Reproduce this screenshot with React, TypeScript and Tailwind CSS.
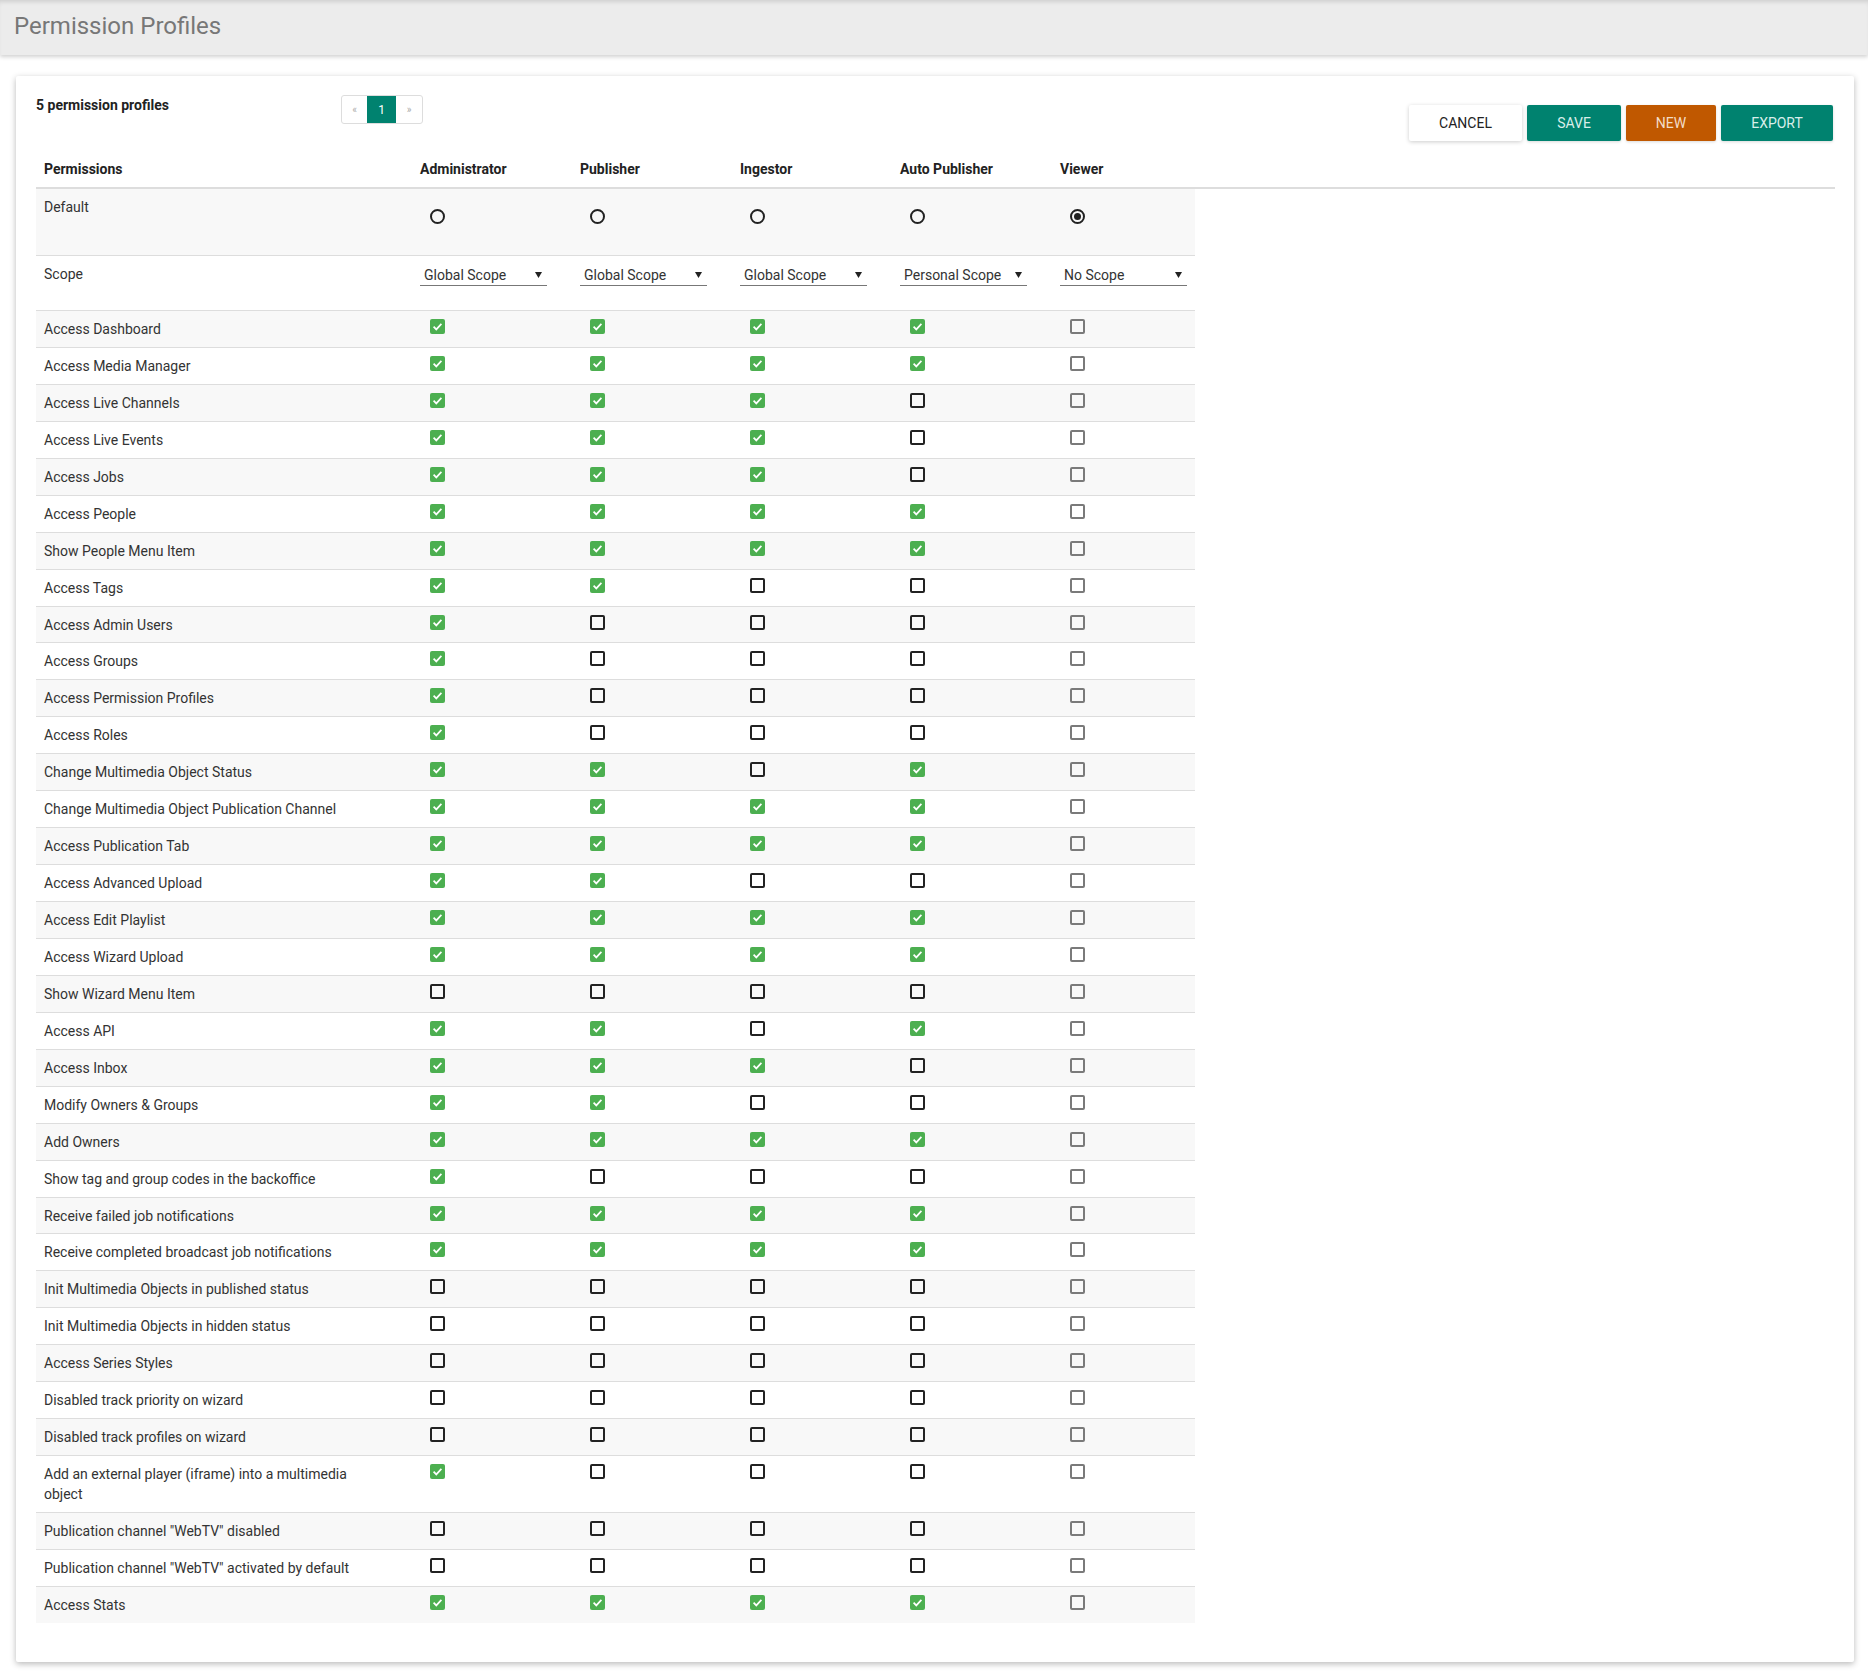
import React from 'react'

type Perm = { label: string; v: [boolean, boolean, boolean, boolean, boolean] }

const Y = true
const N = false

const perms: Perm[] = [
  { label: 'Access Dashboard', v: [Y, Y, Y, Y, N] },
  { label: 'Access Media Manager', v: [Y, Y, Y, Y, N] },
  { label: 'Access Live Channels', v: [Y, Y, Y, N, N] },
  { label: 'Access Live Events', v: [Y, Y, Y, N, N] },
  { label: 'Access Jobs', v: [Y, Y, Y, N, N] },
  { label: 'Access People', v: [Y, Y, Y, Y, N] },
  { label: 'Show People Menu Item', v: [Y, Y, Y, Y, N] },
  { label: 'Access Tags', v: [Y, Y, N, N, N] },
  { label: 'Access Admin Users', v: [Y, N, N, N, N] },
  { label: 'Access Groups', v: [Y, N, N, N, N] },
  { label: 'Access Permission Profiles', v: [Y, N, N, N, N] },
  { label: 'Access Roles', v: [Y, N, N, N, N] },
  { label: 'Change Multimedia Object Status', v: [Y, Y, N, Y, N] },
  { label: 'Change Multimedia Object Publication Channel', v: [Y, Y, Y, Y, N] },
  { label: 'Access Publication Tab', v: [Y, Y, Y, Y, N] },
  { label: 'Access Advanced Upload', v: [Y, Y, N, N, N] },
  { label: 'Access Edit Playlist', v: [Y, Y, Y, Y, N] },
  { label: 'Access Wizard Upload', v: [Y, Y, Y, Y, N] },
  { label: 'Show Wizard Menu Item', v: [N, N, N, N, N] },
  { label: 'Access API', v: [Y, Y, N, Y, N] },
  { label: 'Access Inbox', v: [Y, Y, Y, N, N] },
  { label: 'Modify Owners & Groups', v: [Y, Y, N, N, N] },
  { label: 'Add Owners', v: [Y, Y, Y, Y, N] },
  { label: 'Show tag and group codes in the backoffice', v: [Y, N, N, N, N] },
  { label: 'Receive failed job notifications', v: [Y, Y, Y, Y, N] },
  { label: 'Receive completed broadcast job notifications', v: [Y, Y, Y, Y, N] },
  { label: 'Init Multimedia Objects in published status', v: [N, N, N, N, N] },
  { label: 'Init Multimedia Objects in hidden status', v: [N, N, N, N, N] },
  { label: 'Access Series Styles', v: [N, N, N, N, N] },
  { label: 'Disabled track priority on wizard', v: [N, N, N, N, N] },
  { label: 'Disabled track profiles on wizard', v: [N, N, N, N, N] },
  { label: 'Add an external player (iframe) into a multimedia object', v: [Y, N, N, N, N] },
  { label: 'Publication channel "WebTV" disabled', v: [N, N, N, N, N] },
  { label: 'Publication channel "WebTV" activated by default', v: [N, N, N, N, N] },
  { label: 'Access Stats', v: [Y, Y, Y, Y, N] },
]

const profiles = ['Administrator', 'Publisher', 'Ingestor', 'Auto Publisher', 'Viewer']
const scopes = ['Global Scope', 'Global Scope', 'Global Scope', 'Personal Scope', 'No Scope']

function Check({ on, muted }: { on: boolean; muted?: boolean }) {
  if (on) {
    return (
      <span className="block w-[15px] h-[15px] rounded-[2px] bg-[#4caf50]">
        <svg width="15" height="15" viewBox="0 0 15 15">
          <path d="M3.6 7.6 L6.3 10.4 L11.4 4.9" fill="none" stroke="#fff" strokeWidth="1.7" />
        </svg>
      </span>
    )
  }
  return (
    <span
      className={
        muted
          ? 'block w-[15px] h-[15px] rounded-[2px] border-2 border-[#7a7a7a]'
          : 'block w-[15px] h-[15px] rounded-[2px] border-2 border-[#222]'
      }
    />
  )
}

function Radio({ on }: { on: boolean }) {
  return (
    <span className="flex items-center justify-center w-[15px] h-[15px] rounded-full border-2 border-[#222]">
      {on && <span className="block w-[7px] h-[7px] rounded-full bg-[#222]" />}
    </span>
  )
}

function Row({ index, tall, children }: { index: number; tall?: boolean; children: React.ReactNode }) {
  const stripe = index % 2 === 0 ? 'bg-[#f8f8f8]' : 'bg-white'
  return (
    <div
      className={
        (tall
          ? 'grid grid-cols-[376px_160px_160px_160px_160px_143px] h-[56.94px] border-t border-[#ddd] '
          : 'grid grid-cols-[376px_160px_160px_160px_160px_143px] h-[36.94px] border-t border-[#ddd] ') + stripe
      }
    >
      {children}
    </div>
  )
}

export default function App() {
  return (
    <div className="min-h-[1680px] bg-white text-[#333] font-['Roboto','Liberation_Sans',sans-serif]">
      <header className="h-[55px] bg-[#ececec] pl-[14px] pt-[10px] shadow-[0_2px_4px_rgba(0,0,0,0.18),inset_0_4px_4px_-2px_rgba(0,0,0,0.12)]">
        <h1 className="text-[24px] leading-[32px] font-normal text-[#777]">Permission Profiles</h1>
      </header>

      <main className="pt-[21px] pl-[16px]">
        <div className="w-[1838px] bg-white rounded-[2px] shadow-[0_2px_6px_rgba(0,0,0,0.28)] pl-[20px] pr-[19px] pt-[19px] pb-[39px]">
          <div className="flex items-start h-[56px]">
            <div className="w-[305px] text-sm leading-5 font-bold text-[#222]">5 permission profiles</div>
            <div className="flex h-[29px] border border-[#ddd] rounded-[3px] overflow-hidden">
              <span className="w-[25px] flex items-center justify-center text-[10px] text-[#aaa]">«</span>
              <span className="w-[29px] flex items-center justify-center text-[12px] text-white bg-[#00826f]">1</span>
              <span className="w-[26px] flex items-center justify-center text-[10px] text-[#aaa]">»</span>
            </div>
            <div className="ml-auto mr-[2px] mt-[10px] flex gap-[5px]">
              <button className="w-[113px] h-[36px] rounded-[2px] bg-white text-sm text-[#222] shadow-[0_1px_4px_rgba(0,0,0,0.2)]">
                CANCEL
              </button>
              <button className="w-[94px] h-[36px] rounded-[2px] bg-[#00826f] text-sm text-[#d9eeea] shadow-[0_1px_3px_rgba(0,0,0,0.15)]">
                SAVE
              </button>
              <button className="w-[90px] h-[36px] rounded-[2px] bg-[#c05800] text-sm text-[#f3dcc8] shadow-[0_1px_3px_rgba(0,0,0,0.15)]">
                NEW
              </button>
              <button className="w-[112px] h-[36px] rounded-[2px] bg-[#00826f] text-sm text-[#d9eeea] shadow-[0_1px_3px_rgba(0,0,0,0.15)]">
                EXPORT
              </button>
            </div>
          </div>

          <div className="flex border-b-2 border-[#ddd] text-sm leading-5 font-bold text-[#222]">
            <div className="w-[376px] px-2 py-2">Permissions</div>
            {profiles.map((p, i) => (
              <div key={p} className={i === 4 ? 'w-[143px] px-2 py-2' : 'w-[160px] px-2 py-2'}>
                {p}
              </div>
            ))}
          </div>

          <div className="w-[1159px] text-sm leading-5">
            <div className="grid grid-cols-[376px_160px_160px_160px_160px_143px] h-[66px] bg-[#f8f8f8]">
              <div className="px-2 py-2">Default</div>
              {profiles.map((p, i) => (
                <div key={p} className="pl-[18px] pt-[20px]">
                  <Radio on={i === 4} />
                </div>
              ))}
            </div>

            <div className="grid grid-cols-[376px_160px_160px_160px_160px_143px] h-[55px] border-t border-[#ddd] bg-white">
              <div className="px-2 pt-2">Scope</div>
              {scopes.map((s, i) => (
                <div key={i} className="px-2 pt-2">
                  <div className="w-[127px] h-[22px] flex items-center justify-between pl-1 pr-[5px] border-b border-[#777]">
                    <span>{s}</span>
                    <svg width="7" height="6" viewBox="0 0 7 6">
                      <path d="M0 0 H7 L3.5 6 Z" fill="#222" />
                    </svg>
                  </div>
                </div>
              ))}
            </div>

            {perms.map((p, r) => (
              <Row key={p.label} index={r + 2} tall={p.label.length > 52}>
                <div className="px-2 py-2">
                  <span className="block w-[320px]">{p.label}</span>
                </div>
                {p.v.map((on, c) => (
                  <div key={c} className="pl-[18px] pt-2">
                    <Check on={on} muted={c === 4} />
                  </div>
                ))}
              </Row>
            ))}
          </div>
        </div>
      </main>
    </div>
  )
}
